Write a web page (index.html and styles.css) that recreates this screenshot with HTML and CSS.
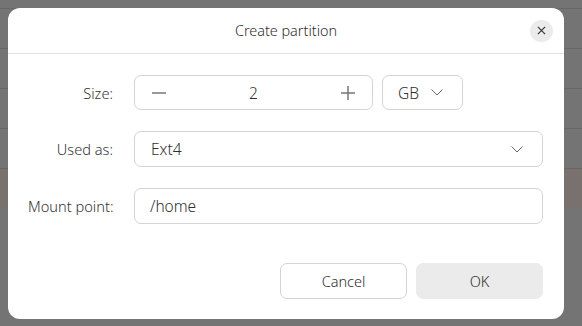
FILE: index.html
```html
<!DOCTYPE html>
<html>
<head>
	<title>
		Create partition
	</title>

	<link rel="stylesheet" href="styles.css">
</head>
<body>
	<div class="backdrop">
		<div class="backdrop-row"></div>
		<div class="backdrop-row"></div>
		<div class="backdrop-row"></div>
		<div class="backdrop-row"></div>
		<div class="backdrop-row selected"></div>
	</div>

	<div class="dialog">
		<div class="dialog-header">
			<span></span>
			<div class="dialog-title">Create partition</div>
			<button class="close-button">
				<svg width="10" height="10" viewBox="0 0 10 10">
					<path d="M1 1 L9 9 M9 1 L1 9" stroke="#333" stroke-width="1.3" fill="none"/>
				</svg>
			</button>
		</div>

		<div class="dialog-body">
			<div class="form-grid">
				<label class="form-label">Size:</label>
				<div class="size-row">
					<div class="spin-box">
						<button class="spin-button">
							<svg width="16" height="16" viewBox="0 0 16 16">
								<path d="M1 8 H15" stroke="#777" stroke-width="1.5"/>
							</svg>
						</button>
						<div class="spin-value">2</div>
						<button class="spin-button">
							<svg width="16" height="16" viewBox="0 0 16 16">
								<path d="M1 8 H15 M8 1 V15" stroke="#777" stroke-width="1.5"/>
							</svg>
						</button>
					</div>
					<div class="select unit-select">
						<span>GB</span>
						<svg class="chevron" width="12" height="7" viewBox="0 0 12 7">
							<polyline points="0.5,0.5 6,6 11.5,0.5" stroke="#666" stroke-width="1" fill="none"/>
						</svg>
					</div>
				</div>

				<label class="form-label">Used as:</label>
				<div class="select">
					<span>Ext4</span>
					<svg class="chevron" width="12" height="7" viewBox="0 0 12 7">
						<polyline points="0.5,0.5 6,6 11.5,0.5" stroke="#666" stroke-width="1" fill="none"/>
					</svg>
				</div>

				<label class="form-label">Mount point:</label>
				<div class="text-field">/home</div>
			</div>

			<div class="dialog-buttons">
				<button class="dialog-button">Cancel</button>
				<button class="dialog-button ok">OK</button>
			</div>
		</div>
	</div>
</body>
</html>
```

FILE: styles.css
```css
body {
	margin: 0;
	background: #747474;
	font-family: "Noto Sans", sans-serif;
	font-weight: 300;
	color: #333;
}

.backdrop {
	padding-top: 8px;
}

.backdrop-row {
	height: 39px;
	border-top: 1px solid #676767;
}

.backdrop-row.selected {
	background: #78716e;
}

.dialog {
	position: absolute;
	left: 8px;
	top: 8px;
	width: 556px;
	height: 311px;
	background: #fff;
	border-radius: 12px;
	display: flex;
	flex-direction: column;
}

.dialog-header {
	height: 45px;
	border-bottom: 1px solid #e4e4e4;
	display: grid;
	grid-template-columns: 1fr auto 1fr;
	align-items: center;
	padding-right: 11px;
	padding-left: 11px;
}

.dialog-title {
	font-size: 14.4px;
	color: #2e2e2e;
}

.close-button {
	justify-self: end;
	width: 23px;
	height: 22px;
	border-radius: 50%;
	border: none;
	background: #ebebeb;
	padding: 0;
	display: flex;
	align-items: center;
	justify-content: center;
}

.close-button svg {
	width: 9px;
	height: 9px;
}

.dialog-body {
	padding: 21px 21px 20px 20px;
	display: flex;
	flex-direction: column;
	flex: 1;
}

.form-grid {
	display: grid;
	grid-template-columns: 85px 1fr;
	column-gap: 21px;
	row-gap: 21px;
	align-items: center;
}

.form-label {
	font-size: 14.6px;
	text-align: right;
	white-space: nowrap;
	color: #333;
}

.size-row {
	display: flex;
	gap: 9px;
}

.spin-box, .select, .text-field {
	box-sizing: border-box;
	height: 35px;
	border: 1px solid #d3d3d3;
	border-radius: 7px;
	font-size: 15.5px;
	color: #2e2e2e;
}

.select, .text-field {
	height: 36px;
}

.spin-box {
	width: 239px;
	display: grid;
	grid-template-columns: 48px 1fr 48px;
	align-items: center;
}

.spin-button {
	border: none;
	background: none;
	padding: 0;
	height: 100%;
	display: flex;
	align-items: center;
	justify-content: center;
}

.spin-value {
	text-align: center;
}

.select {
	display: flex;
	align-items: center;
	justify-content: space-between;
	padding: 0 19px 0 16px;
}

.unit-select {
	width: 81px;
	height: 35px;
	padding-left: 15px;
}

.text-field {
	display: flex;
	align-items: center;
	padding-left: 15px;
}

.dialog-buttons {
	margin-top: auto;
	display: flex;
	justify-content: flex-end;
	gap: 9px;
}

.dialog-button {
	width: 127px;
	height: 36px;
	border: 1px solid #d3d3d3;
	border-radius: 7px;
	background: #fff;
	font-family: "Noto Sans", sans-serif;
	font-weight: 300;
	font-size: 14.5px;
	color: #2e2e2e;
}

.dialog-button.ok {
	background: #ebebeb;
	border-color: #ebebeb;
}
```
